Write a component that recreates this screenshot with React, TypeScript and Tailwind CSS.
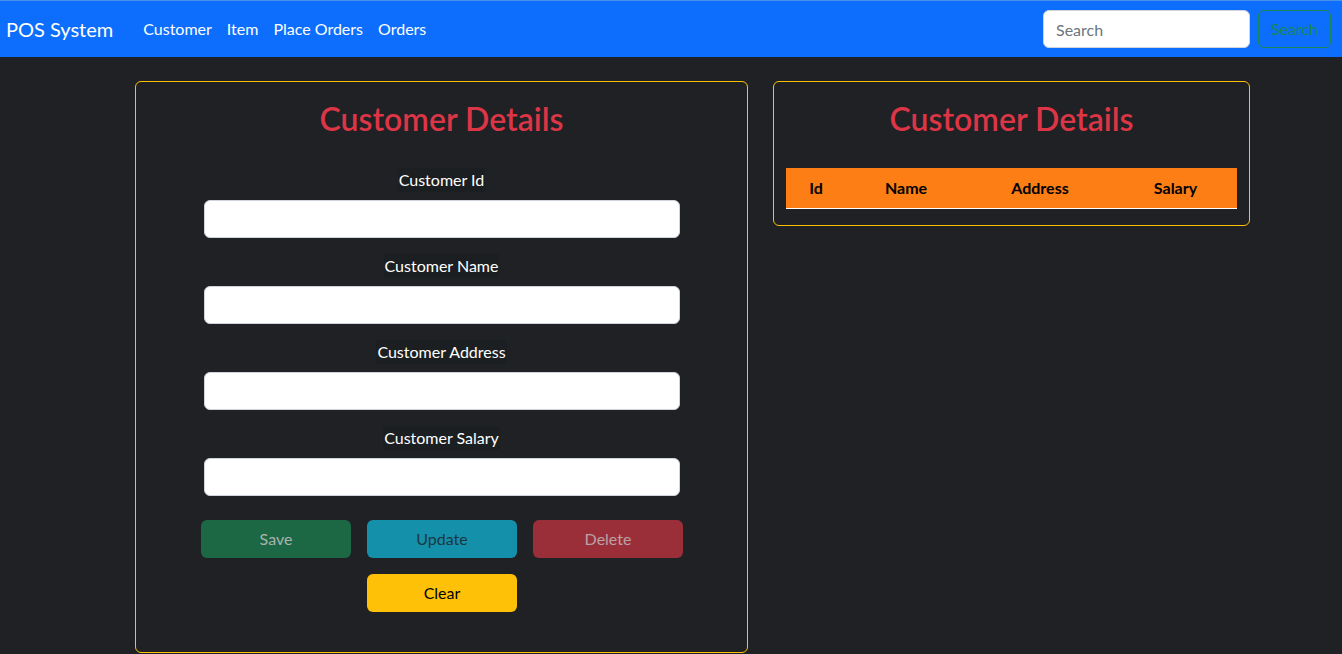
import React from 'react';

const fields = ['Customer Id', 'Customer Name', 'Customer Address', 'Customer Salary'];

const App: React.FC = () => {
  return (
    <div className="min-h-[654px] bg-[#1f2125] font-['Lato','Liberation_Sans',sans-serif]">
      {/* Navbar */}
      <nav className="h-[57px] bg-[#0d6efd] border-t border-[#4a8fe8] flex items-center pl-[6px] pr-[11px]">
        <span className="text-white text-[20px] mr-[30px]">POS System</span>
        <ul className="flex gap-[15px] text-white text-[16px]">
          <li>Customer</li>
          <li>Item</li>
          <li>Place Orders</li>
          <li>Orders</li>
        </ul>
        <div className="ml-auto flex gap-[8px]">
          <input
            placeholder="Search"
            className="w-[207px] h-[38px] rounded-[6px] bg-white border border-[#ced4da] px-[12px] text-[16px] text-[#212529] placeholder:text-[#6c757d] outline-none"
          />
          <button className="w-[73px] h-[38px] rounded-[6px] border border-[#198754] text-[#198754] text-[16px]">
            Search
          </button>
        </div>
      </nav>

      {/* Content */}
      <div className="flex items-start gap-[25px] pl-[135px] pt-[24px]">
        {/* Form card */}
        <div className="w-[613px] h-[572px] border border-[#ffc107] rounded-[6px] flex flex-col items-center pt-[17px]">
          <h2 className="text-[#dc3545] text-[32px] font-semibold leading-[40px] mb-[29px]">Customer Details</h2>
          <div className="flex flex-col items-center gap-[16px]">
            {fields.map((f) => (
              <div key={f} className="flex flex-col items-center gap-[8px]">
                <label className="text-white text-[16px] leading-[24px] bg-[#1c1f22] px-[1px]">{f}</label>
                <input className="w-[476px] h-[38px] rounded-[6px] bg-white border border-[#ced4da] outline-none" />
              </div>
            ))}
          </div>
          <div className="grid grid-cols-3 gap-x-[16px] gap-y-[16px] mt-[24px] ml-[1px] text-[16px]">
            <button className="w-[150px] h-[38px] rounded-[6px] bg-[#1c6845] text-[#a9b3ad]">Save</button>
            <button className="w-[150px] h-[38px] rounded-[6px] bg-[#1590aa] text-[#1b3840]">Update</button>
            <button className="w-[150px] h-[38px] rounded-[6px] bg-[#9a2f3a] text-[#b9a2a5]">Delete</button>
            <button className="col-start-2 w-[150px] h-[38px] rounded-[6px] bg-[#ffc107] text-black">Clear</button>
          </div>
        </div>

        {/* Table card */}
        <div className="w-[477px] border border-[#ffc107] rounded-[6px] px-[12px] pt-[17px] pb-[16px]">
          <h2 className="text-[#dc3545] text-[32px] font-semibold leading-[40px] text-center mb-[29px]">Customer Details</h2>
          <table className="w-full border-collapse text-[16px]">
            <thead>
              <tr className="bg-[#fd7e14] text-black font-bold border-b border-white">
                <th className="w-[60px] h-[40px] text-center">Id</th>
                <th className="w-[120px] text-center">Name</th>
                <th className="w-[148px] text-center">Address</th>
                <th className="text-center">Salary</th>
              </tr>
            </thead>
          </table>
        </div>
      </div>
    </div>
  );
};

export default App;
